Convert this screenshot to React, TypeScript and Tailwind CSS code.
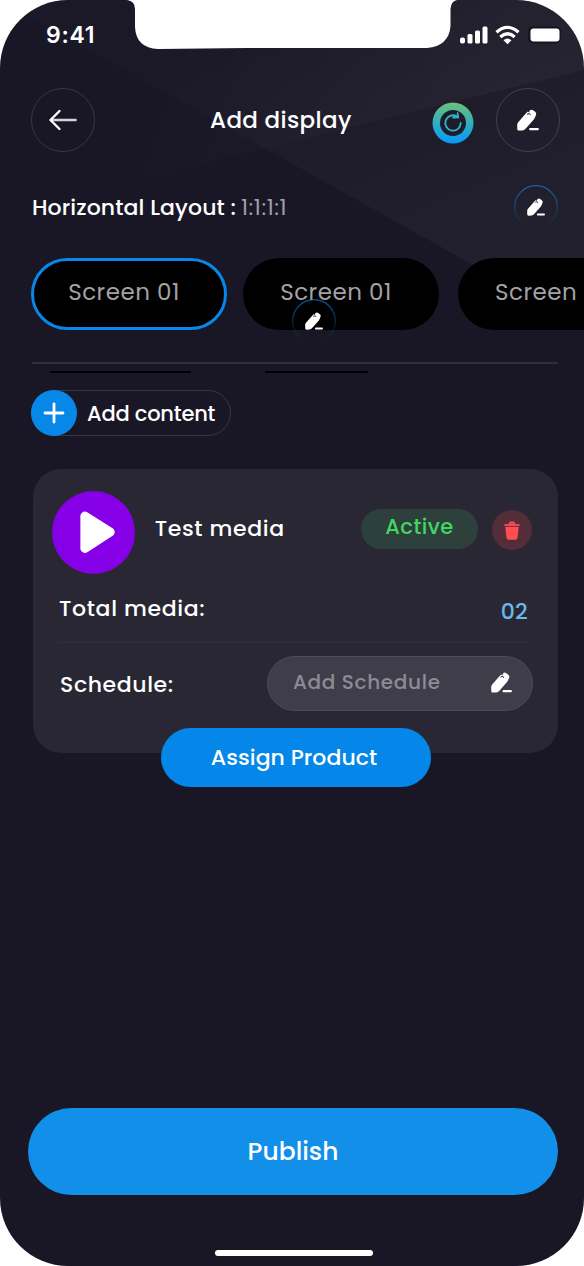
import React from "react";

function Pencil({ className = "" }: { className?: string }) {
  return (
    <svg viewBox="0 0 22 22" className={className} fill="none">
      <path d="M8.800 4.500 10.800 2.500 12 3.600 12.800 1.200Q14.200.2 15.600 1L18.200 2.800Q19.900 4.200 18.900 6.200L17.200 10 8.800 19.600Q7.400 21.300 5.600 21.400L2 21.600Q.3 21.700.3 20.200L.2 15.800Q.2 14.400 1.200 13.200Z" fill="#fff" />
      <path d="M10 5.300 12.400 4.500 13.500 6.200" stroke="#1b1929" strokeWidth="1" />
      <path d="M13.200 20.100H20.800" stroke="#fff" strokeWidth="2.300" strokeLinecap="round" />
    </svg>
  );
}

function RingPencil() {
  return (
    <div className="relative flex h-[44px] w-[44px] items-center justify-center">
      <svg viewBox="0 0 44 44" className="absolute inset-0 size-full" fill="none">
        <defs>
          <linearGradient id="ringFade" x1="0" y1="0" x2="0" y2="1">
            <stop offset="0" stopColor="#0788e9" stopOpacity=".65" />
            <stop offset=".95" stopColor="#0788e9" stopOpacity="0" />
          </linearGradient>
        </defs>
        <circle cx="22" cy="22" r="21.300" stroke="url(#ringFade)" strokeWidth="1.300" />
      </svg>
      <Pencil className="size-[18px]" />
    </div>
  );
}

function Backdrop() {
  return (
    <svg viewBox="0 0 584 1266" className="absolute inset-0 size-full" fill="none">
      <defs>
        <linearGradient id="beamA" x1="320" y1="20" x2="420" y2="260" gradientUnits="userSpaceOnUse">
          <stop offset="0" stopColor="#fff" stopOpacity=".01" />
          <stop offset="1" stopColor="#fff" stopOpacity=".038" />
        </linearGradient>
        <linearGradient id="beamB" x1="180" y1="0" x2="480" y2="100" gradientUnits="userSpaceOnUse">
          <stop offset="0" stopColor="#fff" stopOpacity="0" />
          <stop offset="1" stopColor="#fff" stopOpacity=".03" />
        </linearGradient>
      </defs>
      <path d="M0 0 584 327V0H0Z" fill="url(#beamA)" />
      <path d="M0 213 584 70V0H0Z" fill="url(#beamB)" />
    </svg>
  );
}

function StatusBar() {
  return (
    <div className="flex h-[70px] justify-between pr-[23px] pl-[46px]">
      <span className="pt-[18px] font-['Inter',sans-serif] text-[23px] leading-[34px] font-semibold tracking-[0.7px]">9:41</span>
      <div className="flex items-start pt-[25px]">
        <svg viewBox="0 0 102 22" className="h-[22px] w-[102px]" fill="#fff">
          <rect x="1" y="12.500" width="5" height="6" rx="2" />
          <rect x="8.500" y="9" width="5" height="9.500" rx="1.500" />
          <rect x="16" y="5.500" width="5" height="13" rx="1.500" />
          <rect x="23.500" y="1.500" width="5" height="17" rx="1.500" />
          <path d="M37.500 7.300Q48.500-2.500 59.500 7.300M41.300 12Q48.500 5.500 55.700 12" stroke="#fff" strokeWidth="3.200" fill="none" />
          <path d="M44.500 15.200Q48.500 12 52.500 15.200L48.500 19.300Z" />
          <rect x="69" y="1.500" width="33" height="17" rx="5" fill="#171524" />
          <rect x="71.500" y="3.500" width="29" height="13" rx="3" />
        </svg>
      </div>
    </div>
  );
}

function Header() {
  return (
    <header className="mt-[18px] flex h-[64px] items-center pr-[24px] pl-[31px]">
      <button className="flex size-[64px] items-center justify-center rounded-full border-[1.500px] border-[#393744]">
        <svg viewBox="0 0 30 22" className="h-[22px] w-[30px]" fill="none" stroke="#fff" strokeLinecap="round" strokeLinejoin="round">
          <path d="M3 11H27.500" strokeWidth="2.600" stroke="#d5d4d9" />
          <path d="M11.500 2 2.500 11 11.500 20" strokeWidth="2.300" />
        </svg>
      </button>
      <h1 className="ml-[115px] w-[222px] text-[23px] leading-[32px] font-medium tracking-[0.35px] whitespace-nowrap">Add display</h1>
      <svg viewBox="0 0 42 42" className="mt-[6px] size-[42px]" fill="none">
        <defs>
          <linearGradient id="sync" x1="0" y1="0" x2="0" y2="1">
            <stop offset="0" stopColor="#6cc07b" />
            <stop offset=".5" stopColor="#31aebd" />
            <stop offset="1" stopColor="#0698fb" />
          </linearGradient>
        </defs>
        <circle cx="21" cy="21" r="20.500" fill="url(#sync)" />
        <circle cx="21" cy="21" r="13" fill="#1d1c2b" />
        <path d="M24.500 14.100A7.700 7.700 0 1 0 28.700 21M21 15.500 26.200 15.300 25.600 11.200" stroke="#31b4c6" strokeWidth="1.800" strokeLinecap="round" />
      </svg>
      <button className="ml-auto flex size-[64px] items-center justify-center rounded-full border-[1.500px] border-[#43414f]">
        <Pencil className="size-[22px]" />
      </button>
    </header>
  );
}

function ScreenTabs() {
  return (
    <div className="mt-[29px] flex h-[72px] gap-[16px] pl-[31px] text-[23px] leading-[32px] tracking-[0.5px] text-[#a3a2a4]">
      <button className="w-[196px] shrink-0 rounded-full border-[3px] border-[#0788e9] bg-black pr-[10px] pb-[4px] whitespace-nowrap">Screen 01</button>
      <div className="relative h-[72px] w-[196px] shrink-0">
        <button className="size-full rounded-full bg-black pr-[10px] pb-[4px] whitespace-nowrap">Screen 01</button>
        <div className="absolute top-[41px] left-[49px]">
          <RingPencil />
        </div>
      </div>
      <button className="ml-[3px] w-[196px] shrink-0 rounded-full bg-black pb-[4px] pl-[37px] text-left whitespace-nowrap">Screen</button>
    </div>
  );
}

function MediaCard() {
  return (
    <section className="relative mt-[33px] ml-[33px] h-[284px] w-[525px] rounded-[28px] bg-[#292734] px-[26px] pt-[22px]">
      <div className="flex h-[83px] items-center">
        <div className="-ml-[7px] flex size-[83px] items-center justify-center rounded-full bg-[#8500e6]">
          <svg viewBox="0 0 83 83" className="size-full">
            <path d="M33 25 58.500 41 33 57.500Z" fill="#fff" stroke="#fff" strokeWidth="9" strokeLinejoin="round" />
          </svg>
        </div>
        <h2 className="-mt-[8px] ml-[20px] w-[207px] text-[22px] leading-[32px] font-medium tracking-[0.65px] whitespace-nowrap">Test media</h2>
        <span className="-mt-[8px] flex h-[40px] w-[118px] items-center justify-center rounded-full bg-[#2e403b] pb-[3px] text-[21px] font-medium tracking-[0.45px] text-[#42d664]">Active</span>
        <div className="-mt-[5px] ml-[14px] flex size-[40px] items-center justify-center rounded-full bg-[#532e39]">
          <svg viewBox="0 0 16 19" className="h-[19px] w-[16px]" fill="#ff4e4e">
            <path d="M.6 3H4.500L5.200 1.300Q5.600.5 6.500.5H9.500Q10.400.5 10.800 1.300L11.500 3H15.400V5.200H.6Z" opacity=".9" />
            <path d="M1.300 6H14.700L13.500 16.800Q13.300 18.700 11.500 18.700H4.500Q2.700 18.700 2.500 16.800Z" />
          </svg>
        </div>
      </div>
      <div className="mt-[16px] flex h-[36px] justify-between pr-[4px] text-[22px] leading-[32px] font-medium">
        <span className="mt-[3px] tracking-[0.65px]">Total media:</span>
        <span className="mt-[6px] tracking-[0.2px] text-[#6bb6ed]">02</span>
      </div>
      <div className="mt-[16px] mr-[6px] h-px bg-[#33313d]" />
      <div className="-mr-px mt-[13px] flex h-[55px] items-center justify-between">
        <span className="mt-[2px] ml-px text-[22px] leading-[32px] font-medium tracking-[0.6px]">Schedule:</span>
        <button className="flex h-[55px] w-[266px] items-center justify-between rounded-full border-[1.500px] border-[#4d4b58] bg-[#3f3d4a] pr-[20px] pl-[25px] text-[20px] font-medium tracking-[0.65px] text-[#8d8b95]">
          <span className="-mt-[3px] whitespace-nowrap">Add Schedule</span>
          <Pencil className="-mt-[3px] size-[21px]" />
        </button>
      </div>
      <button className="absolute top-[259px] left-[128px] h-[59px] w-[270px] rounded-full bg-[#0487e8] pr-[4px] text-[22px] font-medium tracking-[0.05px]">Assign Product</button>
    </section>
  );
}

export default function App() {
  return (
    <div className="h-[1266px] w-[584px] overflow-hidden bg-white font-['Poppins','Inter',sans-serif] text-white">
      <main className="relative flex h-full flex-col overflow-hidden rounded-[68px] bg-[#191725]">
        <Backdrop />
        <svg viewBox="0 0 330 49" className="absolute top-0 left-[127px] h-[49px] w-[330px]" fill="#fff">
          <path d="M0 0Q8 1 8 9V27Q9 48 31 49L120 48H300Q322 46 323.500 26V9Q324 1 330 0Z" />
        </svg>
        <div className="relative">
          <StatusBar />
          <Header />
          <div className="mt-[33px] flex h-[44px] items-center justify-between pr-[26px] pl-[32px]">
            <p className="mt-[2px] text-[22px] leading-[32px] whitespace-nowrap"><span className="font-medium tracking-[0.1px]">Horizontal Layout :</span> <span className="-ml-px tracking-[0.55px] text-[#a09fa5]">1:1:1:1</span></p>
            <RingPencil />
          </div>
          <ScreenTabs />
          <div className="mt-[32px] mr-[26px] ml-[32px] h-[2px] bg-[#302e3b]" />
          <div className="mt-[7px] flex h-[2px] gap-[74px] pl-[50px]">
            <div className="w-[141px] rounded-full bg-black" />
            <div className="w-[103px] rounded-full bg-black" />
          </div>
          <button className="mt-[17px] ml-[31px] flex h-[46px] w-[200px] items-center rounded-full border-[1.500px] border-[#393744] text-[21px] font-medium tracking-[-0.2px]">
            <span className="-ml-px flex size-[46px] shrink-0 items-center justify-center rounded-full bg-[#0788e9]">
              <svg viewBox="0 0 22 22" className="size-[22px]" stroke="#fff" strokeWidth="2.800" strokeLinecap="round"><path d="M11 2V20M2 11H20" /></svg>
            </span>
            <span className="mt-px ml-[10px] whitespace-nowrap">Add content</span>
          </button>
          <MediaCard />
          <button className="mt-[355px] ml-[28px] h-[87px] w-[530px] rounded-full bg-[#128fe9] text-[25px] font-medium">Publish</button>
          <div className="mt-[55px] ml-[215px] h-[6px] w-[158px] rounded-full bg-white" />
        </div>
      </main>
    </div>
  );
}
